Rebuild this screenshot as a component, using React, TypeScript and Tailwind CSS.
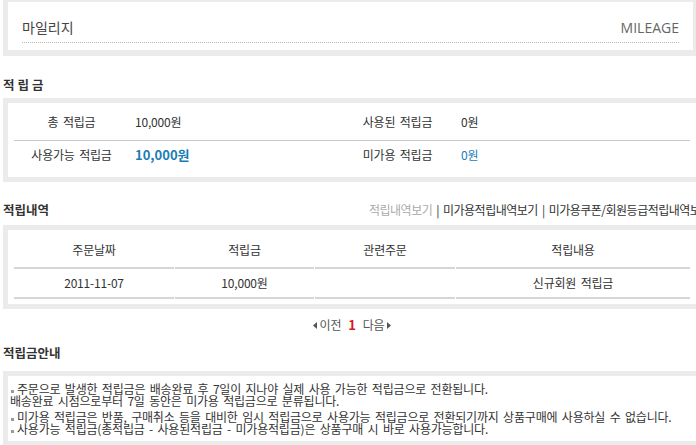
import React from 'react';

const body = "font-['Noto_Sans_CJK_KR',sans-serif] text-[12px] tracking-[-0.2px] [word-spacing:2px] text-[#333]";

const Bullet: React.FC = () => (
  <span className="inline-block w-[3px] h-[3px] bg-[#9a9a9a] mr-[3px] ml-[1px] align-[1px]" />
);

const Arrow: React.FC<{ dir: 'left' | 'right' }> = ({ dir }) => (
  <svg width="4" height="7" viewBox="0 0 4 7" className="inline-block align-[0px]">
    {dir === 'left' ? <path d="M4 0 L0 3.5 L4 7 Z" fill="#555" /> : <path d="M0 0 L4 3.5 L0 7 Z" fill="#555" />}
  </svg>
);

const SectionTitle: React.FC<{ children: React.ReactNode; wide?: boolean }> = ({ children, wide }) => (
  <h3 className={`h-4 leading-4 font-bold text-[12.5px] text-[#333] ${wide ? 'tracking-[3px]' : 'tracking-[0px]'}`}>{children}</h3>
);

export default function App() {
  const summary = [
    [
      { label: '총 적립금', value: '10,000원', tone: 'plain' },
      { label: '사용된 적립금', value: '0원', tone: 'plain' },
    ],
    [
      { label: '사용가능 적립금', value: '10,000원', tone: 'strong' },
      { label: '미가용 적립금', value: '0원', tone: 'blue' },
    ],
  ];

  const valueClass = (tone: string) =>
    tone === 'strong' ? 'text-[#1a7cb5] font-bold text-[13px] tracking-[0px]' : tone === 'blue' ? 'text-[#1a7cb5]' : '';

  return (
    <div className="w-[696px] h-[445px] overflow-hidden bg-white">
      <div className={`w-[704px] px-[3px] ${body}`}>
        {/* page title */}
        <div className="w-[693px] bg-white border-[#ebebeb] border-t-2 border-x-[5px] border-r-[3px] border-b-[6px]">
          <div className="px-[14px] pb-[7px]">
            <div className="h-[41px] pt-[15px] border-b border-dotted border-[#b5b5b5] flex justify-between items-baseline">
              <span className="leading-5 text-[14px] tracking-[0px] text-[#444]">마일리지</span>
              <span className="leading-5 text-[14px] tracking-[0px] text-[#666] font-['Open_Sans',sans-serif]">MILEAGE</span>
            </div>
          </div>
        </div>

        {/* summary */}
        <div className="mt-[21px] mb-[5px]">
          <SectionTitle wide>적립금</SectionTitle>
        </div>
        <div className="bg-white border-[5px] border-[#ebebeb] px-[6px] pb-[8px]">
          {summary.map((row, i) => (
            <div
              key={i}
              className={`grid grid-cols-[114px_212px_114px_1fr] items-center ${i === 0 ? 'h-[38px] border-b border-[#c8c8c8]' : 'h-[28px]'}`}
            >
              {row.map((cell) => (
                <React.Fragment key={cell.label}>
                  <div className="text-center pl-[1px]">{cell.label}</div>
                  <div className={`pl-[7px] ${valueClass(cell.tone)}`}>{cell.value}</div>
                </React.Fragment>
              ))}
            </div>
          ))}
        </div>

        {/* history */}
        <div className="mt-[20px] mb-[7px] flex items-center">
          <div className="w-[366px] shrink-0">
            <SectionTitle>적립내역</SectionTitle>
          </div>
          <div className="whitespace-nowrap leading-4 tracking-[-0.5px]">
            <span className="text-[#aaa]">적립내역보기</span>
            <span className="mx-[4px]">|</span>
            <span>미가용적립내역보기</span>
            <span className="mx-[4px]">|</span>
            <span>미가용쿠폰/회원등급적립내역보기</span>
          </div>
        </div>
        <div className="bg-white border-[5px] border-[#ebebeb] px-[6px] pb-[5px]">
          <div className="grid grid-cols-[160px_139px_140px_1fr] gap-x-px">
            {['주문날짜', '적립금', '관련주문', '적립내용'].map((h) => (
              <div key={h} className="h-[39px] pt-[2px] flex items-center justify-center border-b-2 border-[#d6d6d6]">
                {h}
              </div>
            ))}
            {['2011-11-07', '10,000원', '', '신규회원 적립금'].map((c, i) => (
              <div key={i} className="h-[30px] flex items-center justify-center border-b-2 border-[#d6d6d6]">
                {c}
              </div>
            ))}
          </div>
        </div>

        {/* paging */}
        <div className="mt-[8px] h-4 leading-4 flex items-center justify-center gap-[3px] text-[#555]">
          <Arrow dir="left" />
          <span>이전</span>
          <span className="text-[#d7191f] font-bold text-[13px] mx-[4px]">1</span>
          <span>다음</span>
          <Arrow dir="right" />
        </div>

        {/* guide */}
        <div className="mt-[12px] mb-[10px]">
          <SectionTitle>적립금안내</SectionTitle>
        </div>
        <div className="bg-white border-[5px] border-[#ebebeb] pl-[2px] pt-[7px] pb-[6px] leading-[12px] whitespace-nowrap">
          <p>
            <Bullet />주문으로 발생한 적립금은 배송완료 후 7일이 지나야 실제 사용 가능한 적립금으로 전환됩니다.
          </p>
          <p>배송완료 시점으로부터 7일 동안은 미가용 적립금으로 분류됩니다.</p>
          <p className="mt-[4px]">
            <Bullet />미가용 적립금은 반품, 구매취소 등을 대비한 임시 적립금으로 사용가능 적립금으로 전환되기까지 상품구매에 사용하실 수 없습니다.
          </p>
          <p>
            <Bullet />사용가능 적립금(총적립금 - 사용된적립금 - 미가용적립금)은 상품구매 시 바로 사용가능합니다.
          </p>
        </div>
      </div>
    </div>
  );
}
